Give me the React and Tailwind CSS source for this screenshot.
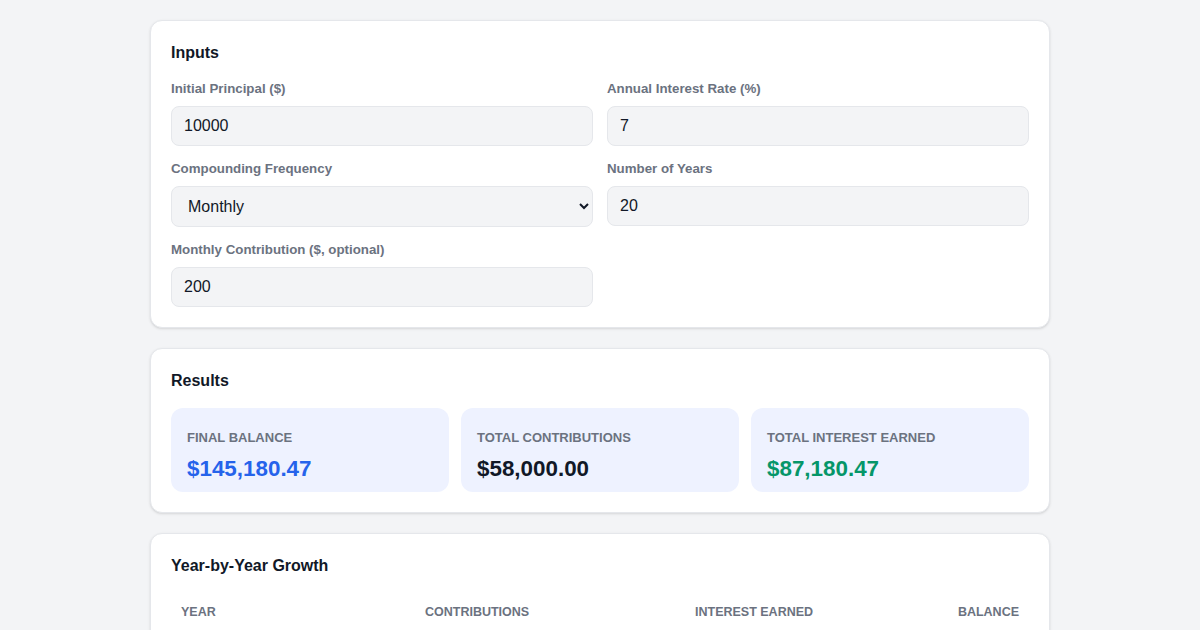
const Field = ({ label, value, select }) => (
  <div>
    <label className="block text-[13.3px] font-bold text-[#6b7280] mb-[9px] leading-[16px]">{label}</label>
    {select ? (
      <select defaultValue={value} className="w-full h-[41px] px-[12px] bg-[#f3f4f6] border border-[#e5e7eb] rounded-lg text-[16px] text-[#111827]">
        <option>Monthly</option>
        <option>Quarterly</option>
        <option>Annually</option>
      </select>
    ) : (
      <input defaultValue={value} className="w-full h-[40px] px-[12px] bg-[#f3f4f6] border border-[#e5e7eb] rounded-lg text-[16px] text-[#111827]" />
    )}
  </div>
);

const Stat = ({ label, value, color }) => (
  <div className="bg-[#eef2ff] rounded-xl px-4 pt-[22px] h-[84px]">
    <div className="text-[13px] font-bold text-[#6b7280] uppercase leading-[16px]">{label}</div>
    <div className={`text-[22.4px] font-bold mt-[9px] leading-[28px] ${color}`}>{value}</div>
  </div>
);

export default function App() {
  return (
    <div className="min-h-screen bg-[#f3f4f6] pt-[20px]" style={{ fontFamily: '"Liberation Sans", Arial, sans-serif' }}>
      <div className="w-[900px] mx-auto flex flex-col gap-[20px]">
        <div className="bg-white rounded-xl border border-[#e5e7eb] shadow-sm p-[20px] pt-[22px]">
          <h2 className="text-[16px] font-bold text-[#111827] leading-[20px] mb-[18px]">Inputs</h2>
          <div className="grid grid-cols-2 gap-x-[14px] gap-y-[15px]">
            <Field label="Initial Principal ($)" value="10000" />
            <Field label="Annual Interest Rate (%)" value="7" />
            <Field label="Compounding Frequency" value="Monthly" select />
            <Field label="Number of Years" value="20" />
            <Field label="Monthly Contribution ($, optional)" value="200" />
          </div>
        </div>
        <div className="bg-white rounded-xl border border-[#e5e7eb] shadow-sm p-[20px] pt-[22px]">
          <h2 className="text-[16px] font-bold text-[#111827] leading-[20px] mb-[17px]">Results</h2>
          <div className="grid grid-cols-3 gap-[12px]">
            <Stat label="Final Balance" value="$145,180.47" color="text-[#2563eb]" />
            <Stat label="Total Contributions" value="$58,000.00" color="text-[#111827]" />
            <Stat label="Total Interest Earned" value="$87,180.47" color="text-[#059669]" />
          </div>
        </div>
        <div className="bg-white rounded-xl border border-[#e5e7eb] shadow-sm p-[20px] pt-[22px]">
          <h2 className="text-[16px] font-bold text-[#111827] leading-[20px] mb-[17px]">Year-by-Year Growth</h2>
          <table className="w-full text-[12.5px]">
            <thead>
              <tr className="border-b border-[#e5e7eb] text-[#6b7280] uppercase font-bold">
                <th className="text-left px-[10px] py-[10px] w-[244px]">Year</th>
                <th className="text-left px-[10px] py-[10px] w-[270px]">Contributions</th>
                <th className="text-left px-[10px] py-[10px]">Interest Earned</th>
                <th className="text-right px-[10px] py-[10px]">Balance</th>
              </tr>
            </thead>
            <tbody>
              <tr className="border-b border-[#f3f4f6] text-[14px] text-[#111827]">
                <td className="px-[10px] py-[10px]">1</td>
                <td className="px-[10px] py-[10px]">$12,400.00</td>
                <td className="px-[10px] py-[10px]">$810.32</td>
                <td className="px-[10px] py-[10px] text-right">$13,210.32</td>
              </tr>
            </tbody>
          </table>
        </div>
      </div>
    </div>
  );
}
